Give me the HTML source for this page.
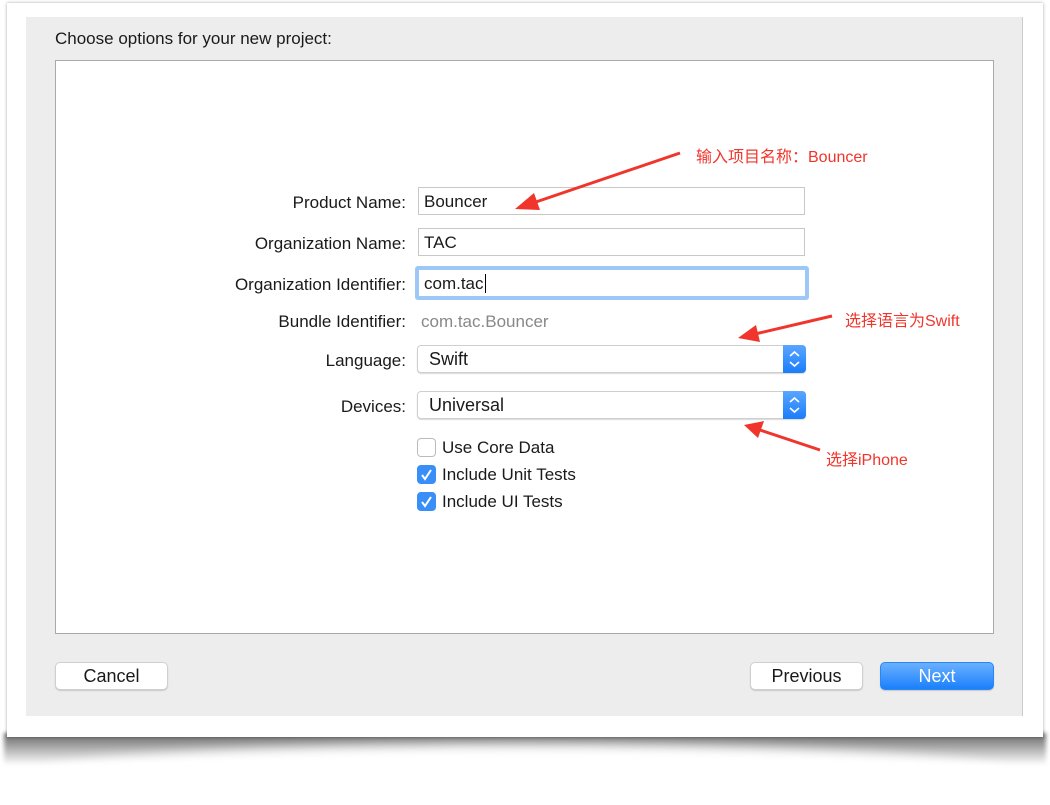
<!DOCTYPE html>
<html><head><meta charset="utf-8"><style>
*{margin:0;padding:0;box-sizing:border-box}
body{width:1050px;height:768px;background:#fff;position:relative;overflow:hidden;font-family:"Liberation Sans","Noto Sans CJK SC",sans-serif;color:#1a1a1a}
.frame{position:absolute;left:7px;top:3px;width:1036px;height:734px;background:#fff;box-shadow:0 0 3px rgba(0,0,0,.35)}
.shadow{position:absolute;left:4px;top:733px;width:1042px;height:32px;background:linear-gradient(#666,#fff);filter:blur(2px)}
.shmask{position:absolute;left:40px;top:745px;width:970px;height:60px;background:#fff;border-radius:50%/50%;filter:blur(6px)}
.panel{position:absolute;left:26px;top:17px;width:997px;height:699px;background:#ededed;border-right:1px solid #ccc}
.title{position:absolute;left:55px;top:29px;font-size:17px}
.box{position:absolute;left:55px;top:60px;width:939px;height:574px;background:#fff;border:1px solid #a9a9a9}
.lbl{position:absolute;right:644px;font-size:17px;text-align:right;white-space:nowrap}
.inp{position:absolute;left:418px;width:387px;height:28px;border:1px solid #c8c8c8;background:#fff;font-size:17px;padding:4px 5px}
.sel{position:absolute;left:417px;width:389px;height:28px;border:1px solid #cfcfcf;border-radius:4px;background:#fff;font-size:18px;padding:3px 11px;box-shadow:0 1px 1px rgba(0,0,0,.15)}
.sel .b{position:absolute;right:-1px;top:-1px;width:23px;height:28px;background:linear-gradient(#5aa6ff,#1a7dfb);border-radius:0 4px 4px 0}
.cb{position:absolute;left:417px;width:19px;height:19px;border-radius:4px;border:1px solid #bbb;background:#fff}
.cb.on{background:#3a8ef7;border-color:#3a8ef7}
.ct{position:absolute;left:442px;font-size:17px}
.red{position:absolute;color:#f0352c;font-size:16px;white-space:nowrap}
.btn{position:absolute;top:662px;height:28px;border-radius:5px;background:#fff;border:1px solid #cfcfcf;box-shadow:0 1px 1px rgba(0,0,0,.15);font-size:18px;text-align:center;line-height:26px}
</style></head><body>
<div class="shadow"></div>
<div class="shmask"></div>
<div class="frame"></div>
<div class="panel"></div>
<div class="title">Choose options for your new project:</div>
<div class="box"></div>
<div class="lbl" style="top:193px">Product Name:</div>
<div class="inp" style="top:187px">Bouncer</div>
<div class="lbl" style="top:234px">Organization Name:</div>
<div class="inp" style="top:228px">TAC</div>
<div class="lbl" style="top:275px">Organization Identifier:</div>
<div class="inp" style="top:266px;left:415px;width:394px;height:34px;border:4px solid #9cc7f6;padding:4px 5px;border-radius:3px">com.tac<span style="border-left:1.5px solid #000;margin-left:1px"></span></div>
<div class="lbl" style="top:312px">Bundle Identifier:</div>
<div style="position:absolute;left:421px;top:312px;font-size:17px;color:#888">com.tac.Bouncer</div>
<div class="lbl" style="top:351px">Language:</div>
<div class="sel" style="top:345px">Swift<div class="b"><svg width="23" height="28" viewBox="0 0 23 28"><path d="M7 11l4.5-4 4.5 4M7 17l4.5 4 4.5-4" fill="none" stroke="#fff" stroke-width="1.6"/></svg></div></div>
<div class="lbl" style="top:397px">Devices:</div>
<div class="sel" style="top:391px">Universal<div class="b"><svg width="23" height="28" viewBox="0 0 23 28"><path d="M7 11l4.5-4 4.5 4M7 17l4.5 4 4.5-4" fill="none" stroke="#fff" stroke-width="1.6"/></svg></div></div>
<div class="cb" style="top:438px"></div><div class="ct" style="top:438px">Use Core Data</div>
<div class="cb on" style="top:465px"><svg width="17" height="17"><path d="M4 9l3 4 6-9" fill="none" stroke="#fff" stroke-width="2"/></svg></div><div class="ct" style="top:465px">Include Unit Tests</div>
<div class="cb on" style="top:492px"><svg width="17" height="17"><path d="M4 9l3 4 6-9" fill="none" stroke="#fff" stroke-width="2"/></svg></div><div class="ct" style="top:492px">Include UI Tests</div>
<div class="red" style="left:696px;top:143px">输入项目名称：Bouncer</div>
<div class="red" style="left:845px;top:307px">选择语言为Swift</div>
<div class="red" style="left:826px;top:446px">选择iPhone</div>
<svg style="position:absolute;left:0;top:0" width="1050" height="768">
<g stroke="#f0352c" stroke-width="3" fill="#f0352c">
<line x1="680" y1="153" x2="530" y2="204"/><polygon points="515,209 534,193 540,210" stroke="none"/>
<line x1="832" y1="316" x2="755" y2="334"/><polygon points="738,338 756,325 760,342" stroke="none"/>
<line x1="820" y1="450" x2="760" y2="430"/><polygon points="744,425 764,421 758,438" stroke="none"/>
</g></svg>
<div class="btn" style="left:55px;width:113px">Cancel</div>
<div class="btn" style="left:750px;width:113px">Previous</div>
<div class="btn" style="left:880px;width:114px;background:linear-gradient(#6ab0ff,#1a80fb);border-color:#2a85f5;color:#fff">Next</div>
</body></html>
